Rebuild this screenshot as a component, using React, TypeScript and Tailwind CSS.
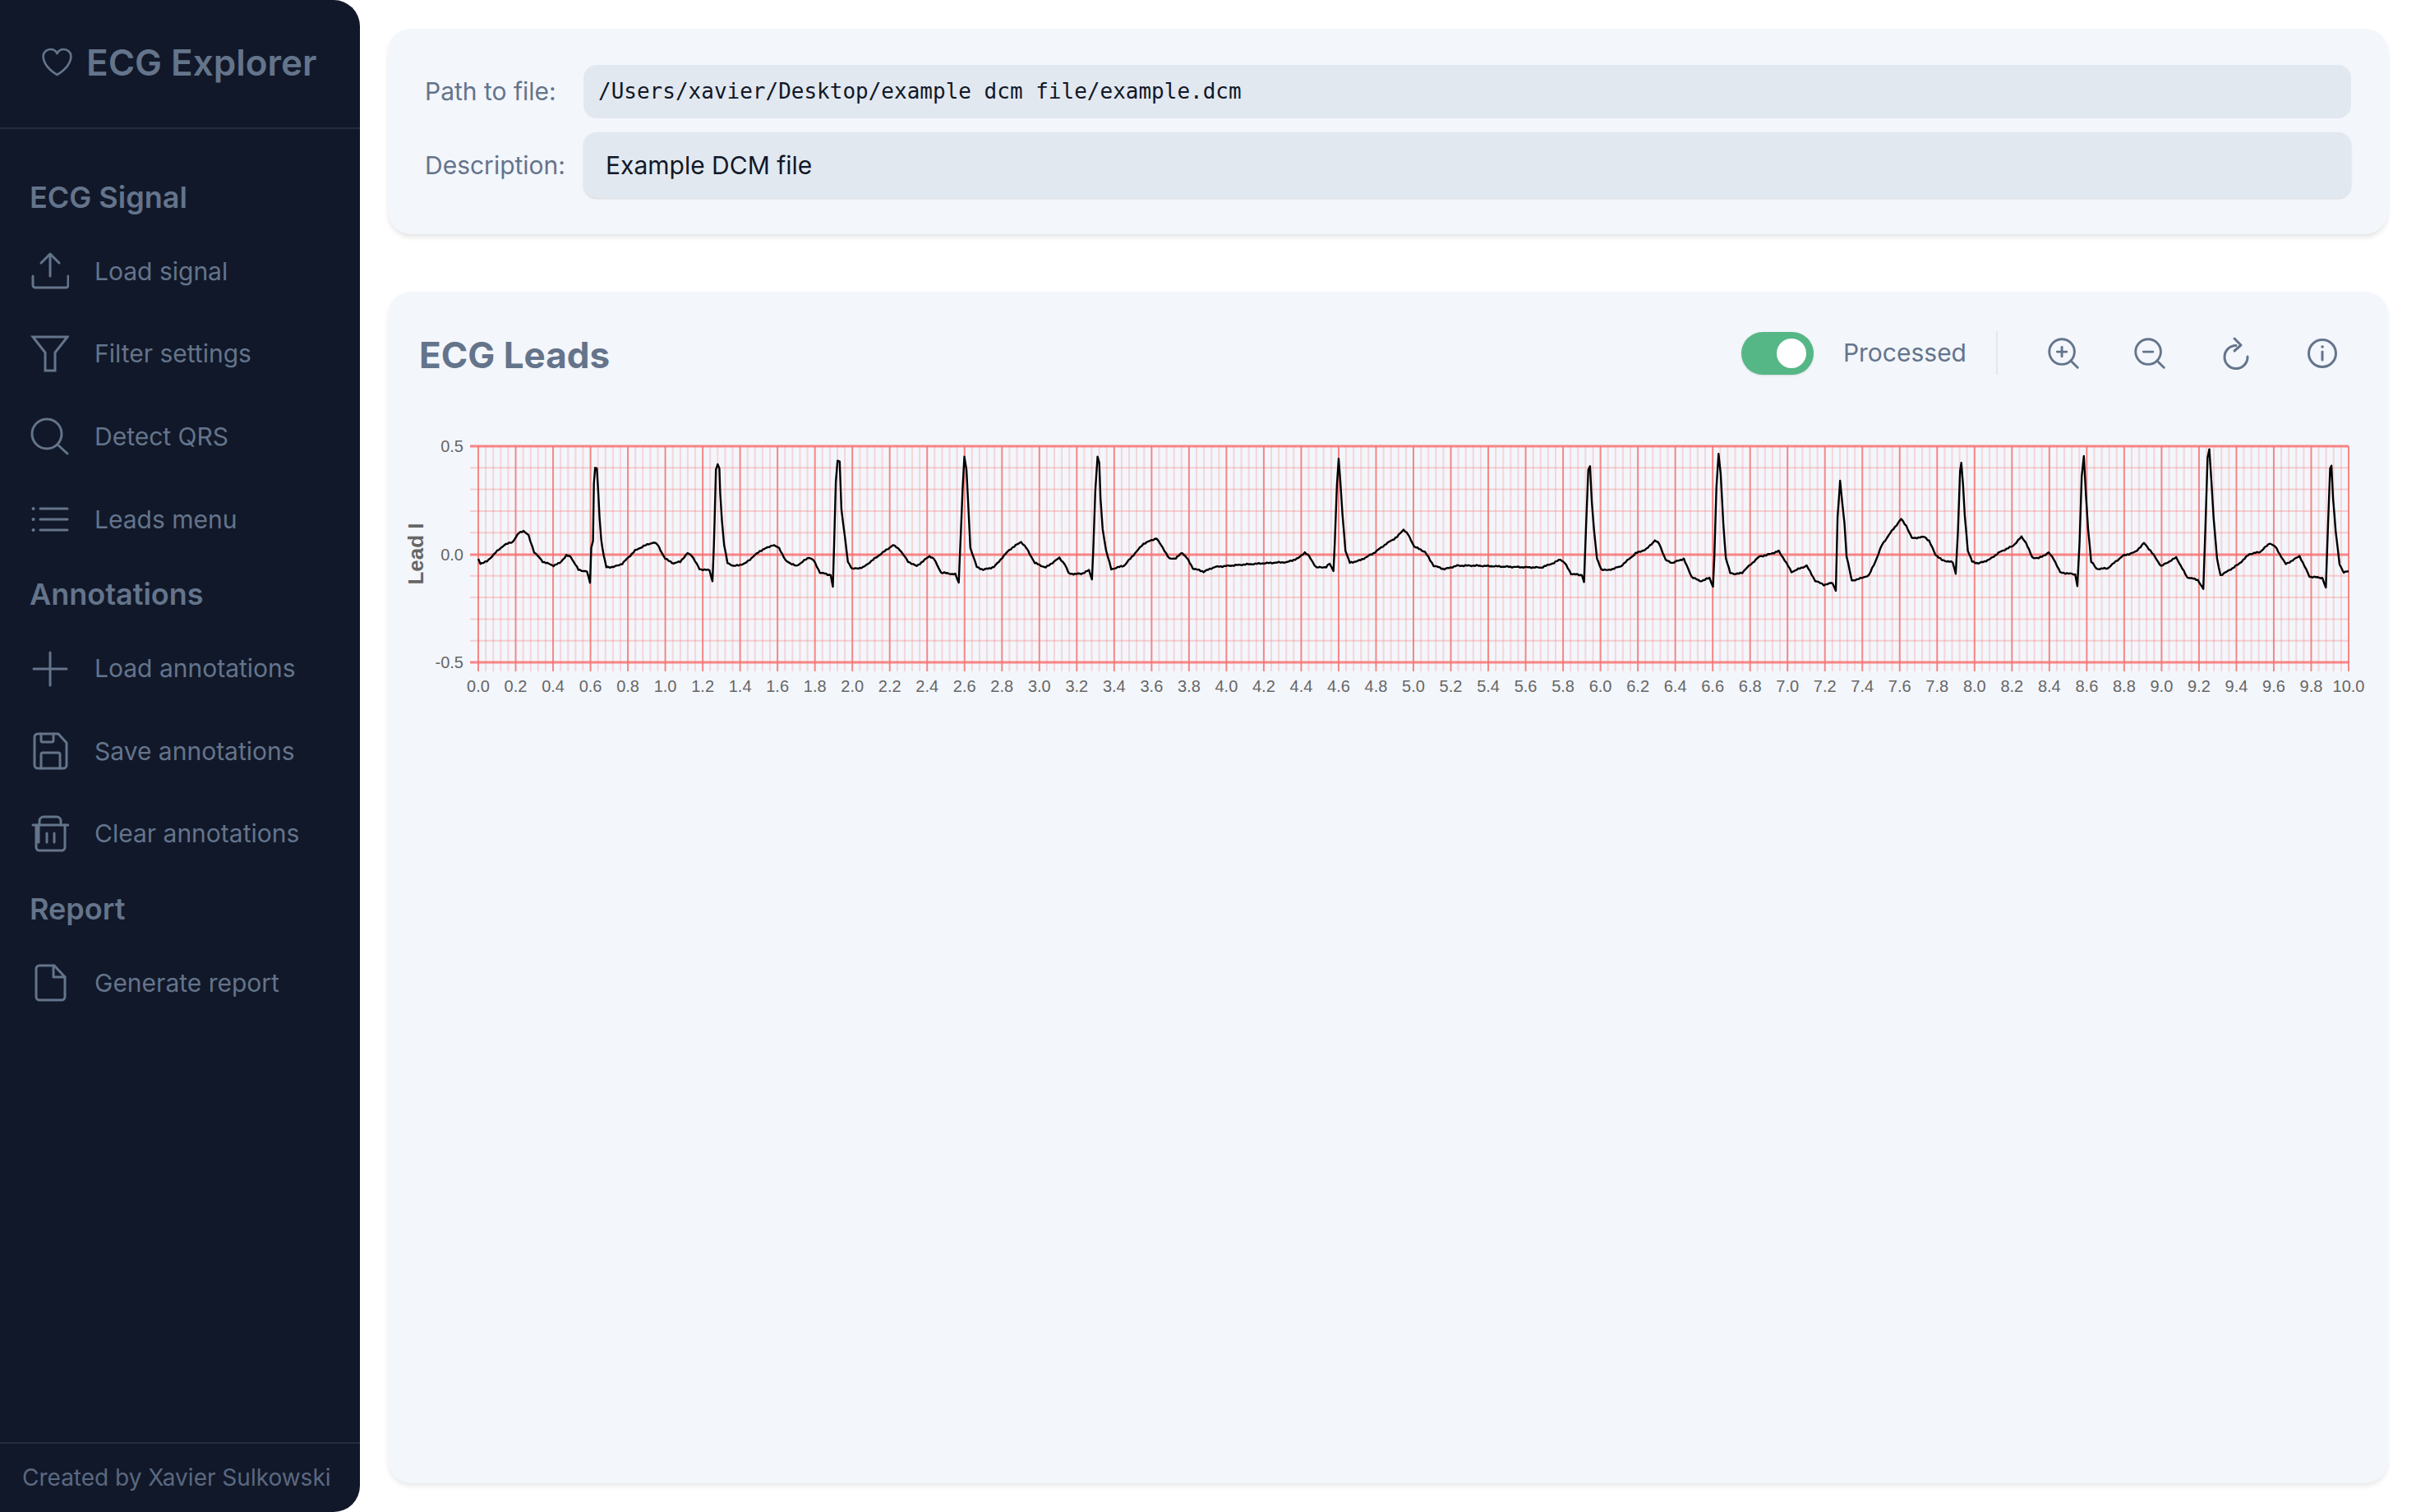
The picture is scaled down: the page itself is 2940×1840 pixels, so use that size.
import { ZoomIn, ZoomOut } from "lucide-react";

// trace points, read off three crops of the chart: [x offset, scale x] + raw crop coords
const SEG_A = [195,480,200,497,215,490,235,458,255,430,275,418,290,385,300,378,312,395,325,455,345,490,370,505,385,495,400,468,410,472,428,520,448,527,455,568,458,440,462,415,464,205,467,148,471,150,474,230,477,325,481,410,487,470,493,510,510,510,530,498,560,450,580,433,603,420,612,428,630,480,650,497,665,490,682,460,692,468,710,518,733,522,740,562,743,440,745,340,748,155,752,135,756,150,758,240,762,340,767,430,775,495,790,507,815,498,850,452,880,430,895,440,910,487,935,507,950,490,965,475,975,485,990,530,1015,540,1020,582,1023,430,1027,200,1031,122,1036,125,1040,300,1048,400,1055,490,1065,517,1090,512,1125,470,1160,430,1175,445,1195,490,1215,507,1245,470,1255,480,1272,530,1305,537,1313,567,1316,450,1322,225,1326,107,1331,155,1335,280,1340,440,1355,510,1370,520,1395,510,1430,448,1458,418,1470,440,1490,495,1515,512,1547,477,1560,500,1568,530];
const SEG_B = [5,535,30,535,48,522,55,555,58,455,63,230,68,107,72,130,75,260,80,370,88,450,100,518,130,505,155,460,175,425,205,405,220,440,235,480,250,478,265,458,275,475,290,515,315,527,340,510,400,502,470,495,510,492,535,478,550,457,560,470,577,512,600,510,608,498,617,525,620,420,625,210,629,115,633,200,638,320,645,450,655,495,680,485,710,460,740,425,765,400,780,373,790,390,805,435,830,455,850,505,875,518,905,505,950,505,1040,510,1100,512,1130,495,1145,482,1155,495,1170,535,1195,540,1200,565,1205,350,1210,155,1214,142,1218,270,1223,370,1230,480,1240,518,1255,522,1285,508,1320,460,1345,445,1365,413,1375,425,1390,485,1405,495,1432,480,1450,545,1470,562,1492,550,1500,582,1503,480,1508,220,1513,97,1518,170,1524,350,1530,480,1540,530,1552,537,1568,530];
const SEG_C = [20,500,40,472,60,465,85,452,95,475,115,528,150,505,170,560,190,575,210,568,218,597,222,330,228,195,232,260,238,350,243,470,255,560,275,552,295,540,310,490,325,430,345,385,370,335,382,360,395,405,425,400,435,415,450,465,465,485,490,493,497,535,502,380,507,160,510,130,514,210,518,320,525,450,535,490,550,497,575,483,600,455,630,433,650,400,660,420,675,475,690,478,713,458,725,480,740,530,775,537,780,580,785,420,790,180,795,105,800,250,805,370,812,490,825,517,850,515,885,470,915,455,935,423,950,450,975,507,1010,475,1035,547,1060,557,1073,590,1078,360,1083,110,1087,80,1092,200,1097,330,1105,480,1113,540,1130,525,1155,500,1180,463,1205,455,1228,423,1240,435,1265,500,1297,470,1320,545,1350,550,1358,585,1363,360,1368,150,1371,140,1375,260,1381,380,1390,500,1400,530,1411,525];

function toPage(seg: number[], offset: number) {
  const out: [number, number][] = [];
  for (let i = 0; i < seg.length; i += 2) {
    out.push([offset + seg[i] / 1.912, 520 + seg[i + 1] / 3]);
  }
  return out;
}

function tracePoints() {
  const pts = [...toPage(SEG_A, 480), ...toPage(SEG_B, 1300), ...toPage(SEG_C, 2120)];
  let d = "";
  let n = 0;
  for (let i = 0; i < pts.length - 1; i++) {
    const [x0, y0] = pts[i];
    const [x1, y1] = pts[i + 1];
    const steps = Math.max(1, Math.round(Math.abs(x1 - x0) / 2));
    for (let s = 0; s < steps; s++) {
      const t = s / steps;
      const noise = steps > 1 ? Math.sin(n * 2.7) * 0.5 + Math.sin(n * 7.3) * 0.4 : 0;
      d += `${(x0 + (x1 - x0) * t).toFixed(1)},${(y0 + (y1 - y0) * t + noise).toFixed(1)} `;
      n++;
    }
  }
  const last = pts[pts.length - 1];
  return d + `${last[0]},${last[1]}`;
}

const LEFT = 582;
const RIGHT = 2858;
const TOP = 543;
const ZERO = 675;
const BOTTOM = 806;

function EcgChart() {
  const stepX = (RIGHT - LEFT) / 250;
  const stepY = (BOTTOM - TOP) / 10;
  const vLines = Array.from({ length: 251 }, (_, i) => i);
  const hLines = Array.from({ length: 11 }, (_, i) => i);
  const xLabels = Array.from({ length: 51 }, (_, i) => i);

  return (
    <svg
      width={2434}
      height={340}
      viewBox="472 520 2434 340"
      className="block font-['Liberation_Sans',sans-serif]"
    >
      {vLines.filter((i) => i % 5 !== 0).map((i) => (
        <line key={i} x1={LEFT + i * stepX} x2={LEFT + i * stepX} y1={TOP} y2={817} stroke="#f87171" strokeOpacity={0.24} strokeWidth={2} />
      ))}
      {hLines.filter((i) => i % 5 !== 0).map((i) => (
        <line key={i} x1={572} x2={RIGHT} y1={TOP + i * stepY} y2={TOP + i * stepY} stroke="#f87171" strokeOpacity={0.3} strokeWidth={2} />
      ))}
      {vLines.filter((i) => i % 5 === 0).map((i) => (
        <line key={i} x1={LEFT + i * stepX} x2={LEFT + i * stepX} y1={TOP} y2={817} stroke="#f87171" strokeOpacity={0.85} strokeWidth={2} />
      ))}
      {[TOP, ZERO, BOTTOM].map((y) => (
        <line key={y} x1={572} x2={RIGHT} y1={y} y2={y} stroke="#f87171" strokeOpacity={0.85} strokeWidth={3} />
      ))}
      <polyline points={tracePoints()} fill="none" stroke="#000" strokeWidth={2.4} strokeLinejoin="round" />
      {xLabels.map((i) => (
        <text key={i} x={LEFT + i * stepX * 5} y={842} textAnchor="middle" fontSize={20} fill="#666">
          {(i * 0.2).toFixed(1)}
        </text>
      ))}
      <text x={564} y={550} textAnchor="end" fontSize={20} fill="#666">0.5</text>
      <text x={564} y={682} textAnchor="end" fontSize={20} fill="#666">0.0</text>
      <text x={564} y={813} textAnchor="end" fontSize={20} fill="#666">-0.5</text>
      <text x={515} y={674} transform="rotate(-90 515 674)" textAnchor="middle" fontSize={26} fontWeight={700} fill="#666">
        Lead I
      </text>
    </svg>
  );
}

// sidebar icons: 48px box, strokes drawn at page scale
function NavIcon({ children }: { children: React.ReactNode }) {
  return (
    <svg width={48} height={48} viewBox="0 0 48 48" fill="none" stroke="currentColor" strokeWidth={3} strokeLinecap="round" strokeLinejoin="round" className="shrink-0">
      {children}
    </svg>
  );
}

const UploadIcon = (
  <NavIcon>
    <path d="M25 30V4M14 14L25 3L36 14" />
    <path d="M4 30V41a3 3 0 0 0 3 3H44a3 3 0 0 0 3-3V30" />
  </NavIcon>
);
const FilterIcon = (
  <NavIcon>
    <path d="M4 3H46L31 22V44H19V22Z" strokeLinecap="butt" strokeLinejoin="miter" />
  </NavIcon>
);
const SearchIcon = (
  <NavIcon>
    <circle cx={21} cy={21} r={18} />
    <path d="M34 34L46 45" />
  </NavIcon>
);
const ListIcon = (
  <NavIcon>
    <path d="M13 11H46M13 24H46M13 37H46" />
    <path d="M4.5 11h.1M4.5 24h.1M4.5 37h.1" strokeWidth={4} />
  </NavIcon>
);
const PlusIcon = (
  <NavIcon>
    <path d="M25 4V44M5 24H45" />
  </NavIcon>
);
const SaveIcon = (
  <NavIcon>
    <path d="M10 3H35L45 14V41a4 4 0 0 1-4 4H10a4 4 0 0 1-4-4V7a4 4 0 0 1 4-4Z" />
    <path d="M14 3V11a2 2 0 0 0 2 2H27a2 2 0 0 0 2-2V3" />
    <path d="M14 45V28a2 2 0 0 1 2-2H35a2 2 0 0 1 2 2V45" />
  </NavIcon>
);
const TrashIcon = (
  <NavIcon>
    <path d="M4 13H47" />
    <path d="M11 34V13M8 13V40a4 4 0 0 0 4 4H39a4 4 0 0 0 4-4V13" />
    <path d="M12 13V8a5 5 0 0 1 5-5H33a5 5 0 0 1 5 5V13" />
    <path d="M21 23V34M30 23V34" />
  </NavIcon>
);
const FileIcon = (
  <NavIcon>
    <path d="M12 3H30L43 17V41a4 4 0 0 1-4 4H12a4 4 0 0 1-4-4V7a4 4 0 0 1 4-4Z" />
    <path d="M29 3V17H43" />
  </NavIcon>
);

const sections = [
  {
    title: "ECG Signal",
    items: [
      { label: "Load signal", icon: UploadIcon },
      { label: "Filter settings", icon: FilterIcon },
      { label: "Detect QRS", icon: SearchIcon },
      { label: "Leads menu", icon: ListIcon },
    ],
  },
  {
    title: "Annotations",
    items: [
      { label: "Load annotations", icon: PlusIcon },
      { label: "Save annotations", icon: SaveIcon },
      { label: "Clear annotations", icon: TrashIcon },
    ],
  },
  {
    title: "Report",
    items: [{ label: "Generate report", icon: FileIcon }],
  },
];

function Sidebar() {
  return (
    <aside className="w-[438px] shrink-0 h-full bg-[#111829] rounded-r-[32px] flex flex-col text-[#64748b]">
      <div className="h-[157px] shrink-0 border-b-2 border-[#252c3c] flex items-center pl-[47px] pb-[4px] gap-[13px]">
        <svg width={45} height={45} viewBox="0 0 24 24" fill="none" stroke="currentColor" strokeWidth={1.4} strokeLinejoin="round">
          <path d="M21 8.25c0-2.485-2.099-4.5-4.688-4.5-1.935 0-3.597 1.126-4.312 2.733-.715-1.607-2.377-2.733-4.313-2.733C5.1 3.75 3 5.765 3 8.25c0 7.22 9 12 9 12s9-4.78 9-12Z" />
        </svg>
        <span className="text-[44px] font-semibold">ECG Explorer</span>
      </div>
      <nav className="flex-1 pt-[42px]">
        {sections.map((section) => (
          <div key={section.title}>
            <div className="h-[81px] flex items-center pl-[36px] text-[36px] font-semibold">{section.title}</div>
            {section.items.map((item) => (
              <div key={item.label} className="h-[100.6px] flex items-center pl-[36px] gap-[31px] text-[30px]">
                {item.icon}
                {item.label}
              </div>
            ))}
          </div>
        ))}
      </nav>
      <div className="h-[85px] shrink-0 border-t-2 border-[#252c3c] pl-[27px] flex items-center pb-[2px] text-[28px] text-[#5b6880]">
        Created by Xavier Sulkowski
      </div>
    </aside>
  );
}

function FileCard() {
  return (
    <section className="h-[250px] shrink-0 bg-[#f3f6fb] rounded-[28px] shadow-[0_4px_6px_-1px_rgba(0,0,0,0.12)] px-[45px] pt-[44px] flex flex-col gap-[17px]">
      <div className="flex items-center">
        <label className="w-[193px] shrink-0 text-[30px] text-[#64748b]">Path to file:</label>
        <div className="flex-1 h-[65px] rounded-[16px] bg-[#e2e8f0] pl-[18px] flex items-center text-[26px] text-[#111827] font-['DejaVu_Sans_Mono',monospace]">
          /Users/xavier/Desktop/example dcm file/example.dcm
        </div>
      </div>
      <div className="flex items-center">
        <label className="w-[193px] shrink-0 text-[30px] text-[#64748b]">Description:</label>
        <div className="flex-1 h-[80px] rounded-[16px] bg-[#e2e8f0] shadow-sm pl-[27px] flex items-center text-[30px] text-[#111827]">
          Example DCM file
        </div>
      </div>
    </section>
  );
}

function LeadsCard() {
  return (
    <section className="flex-1 bg-[#f3f6fb] rounded-[28px] shadow-[0_4px_6px_-1px_rgba(0,0,0,0.1)] flex flex-col">
      <div className="h-[165px] shrink-0 flex items-start justify-between pl-[38px] pr-[28px] pt-[48px]">
        <h2 className="text-[44px] leading-[58px] font-bold text-[#64748b]">ECG Leads</h2>
        <div className="flex items-center h-[53px]">
          <div className="w-[88px] h-[52px] rounded-full bg-[#55b786] shadow-sm flex items-center justify-end pr-[9px]">
            <div className="w-[36px] h-[36px] rounded-full bg-white" />
          </div>
          <span className="ml-[36px] text-[30px] text-[#64748b]">Processed</span>
          <div className="ml-[36px] w-[2px] h-[53px] bg-[#e2e8f0]" />
          <div className="ml-[27px] flex text-[#64748b]">
            <div className="w-[105px] flex justify-center">
              <ZoomIn size={46} strokeWidth={1.5} />
            </div>
            <div className="w-[105px] flex justify-center">
              <ZoomOut size={46} strokeWidth={1.5} />
            </div>
            <div className="w-[105px] flex justify-center">
              <svg width={46} height={46} viewBox="0 0 46 46" fill="none" stroke="currentColor" strokeWidth={3} strokeLinecap="round" strokeLinejoin="round">
                <path d="M37 27A14 14 0 1 1 23 13.5" />
                <path d="M21 5L29 13L21 20" />
              </svg>
            </div>
            <div className="w-[105px] flex justify-center">
              <svg width={46} height={46} viewBox="0 0 46 46" fill="none" stroke="currentColor" strokeWidth={3} strokeLinecap="round">
                <circle cx={23} cy={23} r={16.5} />
                <path d="M23 21V31" />
                <path d="M23 15h.1" strokeWidth={3.5} />
              </svg>
            </div>
          </div>
        </div>
      </div>
      <EcgChart />
    </section>
  );
}

export default function App() {
  return (
    <div className="h-screen flex bg-white font-['Inter',sans-serif] overflow-hidden">
      <Sidebar />
      <main className="flex-1 min-w-0 flex flex-col gap-[70px] px-[34px] py-[35px]">
        <FileCard />
        <LeadsCard />
      </main>
    </div>
  );
}
